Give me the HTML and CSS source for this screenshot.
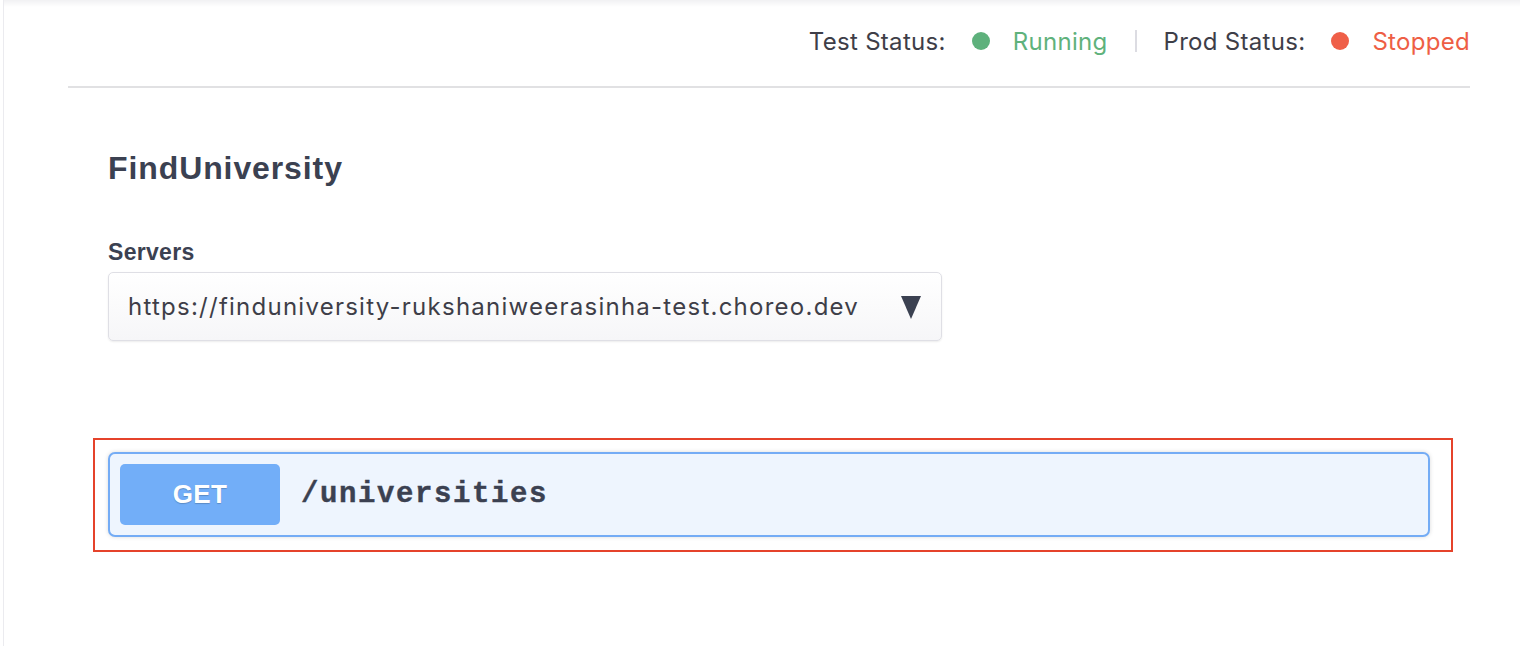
FILE: index.html
```html
<!DOCTYPE html>
<html lang="en">
<head>
<meta charset="utf-8">
<title>FindUniversity</title>
<link rel="stylesheet" href="styles.css">
</head>
<body>
<div class="page">
  <header class="statusbar">
    <div class="statuses">
      <span class="label">Test Status:</span>
      <span class="dot dot-green"></span>
      <span class="state state-running">Running</span>
      <span class="sep"></span>
      <span class="label">Prod Status:</span>
      <span class="dot dot-red"></span>
      <span class="state state-stopped">Stopped</span>
    </div>
    <div class="divider"></div>
  </header>
  <main class="content">
    <h1 class="title">FindUniversity</h1>
    <div class="servers">
      <div class="servers-label">Servers</div>
      <div class="select">
        <span class="select-value">https://finduniversity-rukshaniweerasinha-test.choreo.dev</span>
        <svg class="caret" width="20" height="23" viewBox="0 0 20 23"><polygon points="0,0 20,0 10,23" fill="#3b4151"/></svg>
      </div>
    </div>
    <div class="highlight">
      <div class="opblock">
        <span class="method">GET</span>
        <span class="path">/universities</span>
      </div>
    </div>
  </main>
</div>
</body>
</html>
```
FILE: styles.css
```css
html, body {
  margin: 0;
  padding: 0;
  background: #ffffff;
}
body {
  font-family: "Inter", "Noto Sans", sans-serif;
  color: #3b4151;
}
.page {
  margin-left: 3px;
  border-left: 1px solid #ebebef;
  min-height: 646px;
  background: linear-gradient(#f1f1f3 0px, #ffffff 7px);
}
.statusbar {
  padding: 0 50px 0 64px;
}
.statuses {
  height: 82px;
  display: flex;
  align-items: center;
  justify-content: flex-end;
  font-size: 24px;
  letter-spacing: 0.3px;
  color: #3e3e48;
}
.dot {
  width: 18px;
  height: 18px;
  border-radius: 50%;
  margin: 0 23px 0 26px;
}
.dot-green { background: #5eb17c; }
.dot-red { background: #ef5f48; }
.state-running { color: #5fb27c; }
.state-stopped { color: #ee5e45; }
.sep {
  width: 2px;
  height: 22px;
  background: #dcdce2;
  margin: 0 27px;
}
.divider {
  margin-top: 4px;
  height: 2px;
  background: #e1e1e3;
}
.content {
  padding: 62px 0 0 104px;
}
.title {
  margin: 0;
  font-family: "Liberation Sans", Arial, sans-serif;
  font-weight: 700;
  font-size: 32px;
  line-height: 36px;
  letter-spacing: 0.9px;
  color: #3b4151;
}
.servers {
  margin-top: 53px;
}
.servers-label {
  font-family: "Liberation Sans", Arial, sans-serif;
  font-weight: 700;
  font-size: 23px;
  line-height: 26px;
  letter-spacing: 0.3px;
  color: #3b4151;
}
.select {
  margin-top: 7px;
  width: 834px;
  height: 69px;
  box-sizing: border-box;
  display: flex;
  align-items: center;
  justify-content: space-between;
  padding: 0 20px 0 19px;
  border: 1px solid #dfdfe5;
  border-radius: 5px;
  background: linear-gradient(#ffffff, #f6f6f8);
  box-shadow: 0 1px 2px rgba(0, 0, 0, 0.08);
}
.select-value {
  font-size: 24px;
  letter-spacing: 1.25px;
  color: #3e3e48;
  white-space: nowrap;
}
.caret {
  display: block;
  margin-top: 2px;
  flex: none;
}
.highlight {
  margin: 97px 0 0 -15px;
  width: 1360px;
  box-sizing: border-box;
  border: 2px solid #e5432b;
  padding: 12px 21px 13px 13px;
}
.opblock {
  height: 85px;
  box-sizing: border-box;
  display: flex;
  align-items: center;
  padding: 0 10px;
  border: 2px solid #74acf5;
  border-radius: 7px;
  background: #eef5fe;
  box-shadow: 0 0 4px rgba(0, 0, 0, 0.15);
}
.method {
  width: 160px;
  height: 61px;
  display: flex;
  align-items: center;
  justify-content: center;
  border-radius: 5px;
  background: #72aef8;
  color: #ffffff;
  font-family: "Liberation Sans", Arial, sans-serif;
  font-weight: 700;
  font-size: 26px;
  letter-spacing: 0.3px;
  text-shadow: 0 1px 1px rgba(0, 0, 0, 0.2);
}
.path {
  margin-left: 21px;
  font-family: "Liberation Mono", "Courier New", monospace;
  font-weight: 700;
  font-size: 29px;
  letter-spacing: 1.6px;
  color: #3b4151;
  -webkit-text-stroke: 0.4px #3b4151;
}
```
